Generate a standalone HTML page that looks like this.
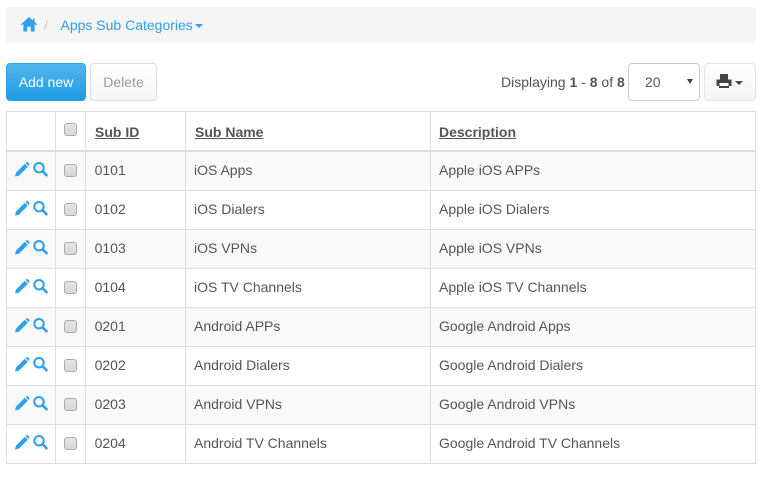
<!DOCTYPE html>
<html><head><meta charset="utf-8"><style>
html,body{margin:0;padding:0;background:#fff;width:768px;height:484px;overflow:hidden}
body{font-family:"Liberation Sans",sans-serif;font-size:14px;color:#555;position:relative}
.a{position:absolute;white-space:nowrap;line-height:20px}
.bc{position:absolute;left:6px;top:7px;width:750px;height:36px;background:#f5f5f5;border-radius:4px}
.btn{position:absolute;box-sizing:border-box;border-radius:4px;text-align:center;line-height:36px;height:38px}
.bd{position:absolute;background:#ddd}
.row{position:absolute;left:7px;width:748px;height:38px}
.cb{position:absolute;left:64px;width:11px;height:11px;border:1px solid #ababab;border-radius:3px;background:linear-gradient(#e4e4e4,#d8d8d8)}
</style></head><body>
<div class="bc"></div>
<svg class="a" style="left:21px;top:16px" width="16" height="16" viewBox="0 0 16 16"><path d="M8 1 L12 4.6 V2.5 H13.6 V6 L16 8.2 L15.2 9.2 L13.6 8 V15.5 H9.8 V10.8 H6.2 V15.5 H2.4 V8 L0.8 9.2 L0 8.2 Z" fill="#2f9fef"/></svg>
<div class="a" style="left:44px;top:15px;color:#ccc">/</div>
<div class="a" style="left:60.5px;top:15px;color:#2f9fef">Apps Sub Categories</div>
<div class="a" style="left:195px;top:24px;width:0;height:0;border-left:4px solid transparent;border-right:4px solid transparent;border-top:4px solid #2f9fef"></div>

<div class="btn" style="left:6px;top:63px;width:80px;color:#fff;background:linear-gradient(#54b4eb,#1d9ce5);border:1px solid #2fa4e7">Add new</div>
<div class="btn" style="left:90px;top:63px;width:67px;color:#999;background:linear-gradient(#fff,#f7f7f7);border:1px solid #ddd">Delete</div>

<div class="a" style="left:501px;top:72px">Displaying <b>1</b> - <b>8</b> of <b>8</b></div>
<div class="btn" style="left:628px;top:63px;width:72px;background:#fff;border:1px solid #ccc;text-align:left;padding-left:16px">20</div>
<div class="a" style="left:687px;top:79px;width:0;height:0;border-left:3px solid transparent;border-right:3px solid transparent;border-top:5px solid #444"></div>
<div class="btn" style="left:704px;top:63px;width:52px;background:linear-gradient(#fff,#f4f4f4);border:1px solid #e4e4e4"></div>
<svg class="a" style="left:716px;top:74px" width="16" height="15" viewBox="0 0 16 15"><path fill-rule="evenodd" d="M4 0 H12 V5.5 H15.5 V12 H13 V14 H3 V12 H0.5 V5.5 H4 Z M3.5 9 V12 H12.5 V9 Z" fill="#444"/></svg>
<div class="a" style="left:735px;top:81px;width:0;height:0;border-left:4px solid transparent;border-right:4px solid transparent;border-top:4px solid #444"></div>

<div class="row" style="top:152px;background:#f9f9f9"></div>
<div class="row" style="top:230px;background:#f9f9f9"></div>
<div class="row" style="top:308px;background:#f9f9f9"></div>
<div class="row" style="top:386px;background:#f9f9f9"></div>

<div class="bd" style="left:6px;top:111px;width:750px;height:1px"></div>
<div class="bd" style="left:6px;top:150px;width:750px;height:2px"></div>
<div class="bd" style="left:6px;top:190px;width:750px;height:1px"></div>
<div class="bd" style="left:6px;top:229px;width:750px;height:1px"></div>
<div class="bd" style="left:6px;top:268px;width:750px;height:1px"></div>
<div class="bd" style="left:6px;top:307px;width:750px;height:1px"></div>
<div class="bd" style="left:6px;top:346px;width:750px;height:1px"></div>
<div class="bd" style="left:6px;top:385px;width:750px;height:1px"></div>
<div class="bd" style="left:6px;top:424px;width:750px;height:1px"></div>
<div class="bd" style="left:6px;top:463px;width:750px;height:1px"></div>
<div class="bd" style="left:6px;top:111px;width:1px;height:353px"></div>
<div class="bd" style="left:55px;top:111px;width:1px;height:353px"></div>
<div class="bd" style="left:85px;top:111px;width:1px;height:353px"></div>
<div class="bd" style="left:185px;top:111px;width:1px;height:353px"></div>
<div class="bd" style="left:430px;top:111px;width:1px;height:353px"></div>
<div class="bd" style="left:755px;top:111px;width:1px;height:353px"></div>

<div class="cb" style="top:123px"></div>
<div class="a" style="left:95px;top:122px;font-weight:bold;text-decoration:underline">Sub ID</div>
<div class="a" style="left:195px;top:122px;font-weight:bold;text-decoration:underline">Sub Name</div>
<div class="a" style="left:439px;top:122px;font-weight:bold;text-decoration:underline">Description</div>

<svg style="position:absolute;width:0;height:0"><defs>
<g id="ic"><path d="M0 14.5 L1 10.6 L9.8 1.8 L12.8 4.8 L4 13.6 Z M10.6 1 L11.6 0.1 Q12.2 -0.2 12.8 0.3 L14.3 1.8 Q14.7 2.4 14.3 3 L13.5 4 Z" fill="#2f9fef"/><circle cx="24" cy="5.7" r="4.7" fill="none" stroke="#2f9fef" stroke-width="2"/><path d="M27.5 9.2 L31.5 13.2" stroke="#2f9fef" stroke-width="2.6" stroke-linecap="round"/></g>
</defs></svg>

<svg class="a" style="left:15px;top:162px" width="34" height="16" viewBox="0 0 34 16"><use href="#ic"/></svg>
<div class="cb" style="top:164px"></div>
<div class="a" style="left:94.6px;top:160px">0101</div><div class="a" style="left:194px;top:160px">iOS Apps</div><div class="a" style="left:439px;top:160px">Apple iOS APPs</div>

<svg class="a" style="left:15px;top:201px" width="34" height="16" viewBox="0 0 34 16"><use href="#ic"/></svg>
<div class="cb" style="top:203px"></div>
<div class="a" style="left:94.6px;top:199px">0102</div><div class="a" style="left:194px;top:199px">iOS Dialers</div><div class="a" style="left:439px;top:199px">Apple iOS Dialers</div>

<svg class="a" style="left:15px;top:240px" width="34" height="16" viewBox="0 0 34 16"><use href="#ic"/></svg>
<div class="cb" style="top:242px"></div>
<div class="a" style="left:94.6px;top:238px">0103</div><div class="a" style="left:194px;top:238px">iOS VPNs</div><div class="a" style="left:439px;top:238px">Apple iOS VPNs</div>

<svg class="a" style="left:15px;top:279px" width="34" height="16" viewBox="0 0 34 16"><use href="#ic"/></svg>
<div class="cb" style="top:281px"></div>
<div class="a" style="left:94.6px;top:277px">0104</div><div class="a" style="left:194px;top:277px">iOS TV Channels</div><div class="a" style="left:439px;top:277px">Apple iOS TV Channels</div>

<svg class="a" style="left:15px;top:318px" width="34" height="16" viewBox="0 0 34 16"><use href="#ic"/></svg>
<div class="cb" style="top:320px"></div>
<div class="a" style="left:94.6px;top:316px">0201</div><div class="a" style="left:194px;top:316px">Android APPs</div><div class="a" style="left:439px;top:316px">Google Android Apps</div>

<svg class="a" style="left:15px;top:357px" width="34" height="16" viewBox="0 0 34 16"><use href="#ic"/></svg>
<div class="cb" style="top:359px"></div>
<div class="a" style="left:94.6px;top:355px">0202</div><div class="a" style="left:194px;top:355px">Android Dialers</div><div class="a" style="left:439px;top:355px">Google Android Dialers</div>

<svg class="a" style="left:15px;top:396px" width="34" height="16" viewBox="0 0 34 16"><use href="#ic"/></svg>
<div class="cb" style="top:398px"></div>
<div class="a" style="left:94.6px;top:394px">0203</div><div class="a" style="left:194px;top:394px">Android VPNs</div><div class="a" style="left:439px;top:394px">Google Android VPNs</div>

<svg class="a" style="left:15px;top:435px" width="34" height="16" viewBox="0 0 34 16"><use href="#ic"/></svg>
<div class="cb" style="top:437px"></div>
<div class="a" style="left:94.6px;top:433px">0204</div><div class="a" style="left:194px;top:433px">Android TV Channels</div><div class="a" style="left:439px;top:433px">Google Android TV Channels</div>
</body></html>
